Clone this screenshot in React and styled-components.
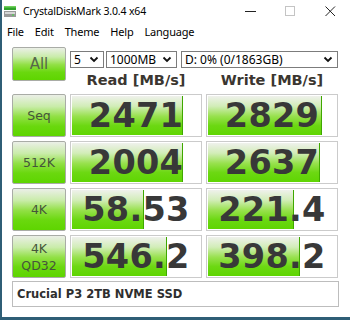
import React from "react";
import styled, { createGlobalStyle } from "styled-components";

const Global = createGlobalStyle`
  html, body { margin: 0; padding: 0; background: #fff; }
  * { box-sizing: border-box; }
`;

const Window = styled.div`
  width: 350px;
  height: 320px;
  background: #fff;
  border-left: 2px solid #2f5e76;
  border-bottom: 3px solid #2f5e76;
  font-family: "Noto Sans", "DejaVu Sans", sans-serif;
  color: #000;
  overflow: hidden;
`;

const TitleBar = styled.div`
  display: flex;
  align-items: center;
  height: 22px;
  padding-left: 1px;
`;

const TitleText = styled.span`
  margin-left: 6px;
  font-size: 10.5px;
  color: #000;
  letter-spacing: -0.15px;
`;

const Controls = styled.div`
  display: flex;
  margin-left: auto;
`;

const Ctrl = styled.div`
  width: 40px;
  height: 22px;
  display: flex;
  align-items: center;
  justify-content: center;
`;

const MenuBar = styled.div`
  display: flex;
  height: 18px;
  align-items: center;
  padding-left: 0;
  font-size: 11px;
`;

const MenuItem = styled.span`
  padding: 0 5px;
  margin-right: 1px;
  letter-spacing: -0.2px;
`;

const Client = styled.div`
  padding: 7px 0 0 10px;
`;

const Grid = styled.div`
  display: grid;
  grid-template-columns: 54px 132px 132px;
  grid-auto-rows: 43px;
  column-gap: 4px;
  row-gap: 4px;
`;

const LabelButton = styled.div`
  height: ${(p) => (p.$short ? "34px" : "43px")};
  border: 1px solid #a9aca6;
  border-radius: 2px;
  background: linear-gradient(#ebefe7 0%, #c9eca9 28%, #92e046 52%, #6ad80e 76%, #5ed500 100%);
  display: flex;
  flex-direction: column;
  align-items: center;
  justify-content: center;
  font-family: "DejaVu Sans", sans-serif;
  font-size: ${(p) => (p.$big ? "15px" : "12.5px")};
  line-height: 17px;
  color: ${(p) => (p.$big ? "#56674a" : "#45553a")};
`;

const Top = styled.div`
  grid-column: 2 / 4;
  display: flex;
  flex-direction: column;
`;

const Selects = styled.div`
  display: flex;
  margin-top: 4px;
  height: 17px;
`;

const Select = styled.div`
  width: ${(p) => p.$w}px;
  margin-right: ${(p) => p.$gap || 0}px;
  height: 17px;
  border: 1px solid #7c7c7c;
  display: flex;
  align-items: center;
  padding: 0 4px 0 3px;
  font-size: 12px;
  background: #fff;
  justify-content: space-between;
`;

const Headers = styled.div`
  display: grid;
  grid-template-columns: 132px 132px;
  column-gap: 4px;
  margin-top: 2px;
`;

const Header = styled.div`
  text-align: center;
  font-family: "DejaVu Sans", sans-serif;
  font-weight: bold;
  font-size: 14.5px;
  color: #3b3630;
  line-height: 20px;
`;

const Cell = styled.div`
  position: relative;
  border: 1px solid #cbcbcb;
  background: #fff;
  overflow: hidden;
`;

const Bar = styled.div`
  position: absolute;
  left: 1px;
  top: 1px;
  bottom: 1px;
  background: linear-gradient(#eff1ec 0%, #d2edb8 26%, #98e14e 52%, #6cd812 76%, #5fd502 100%);
  border-right: 1px solid #3fa800;
`;

const Value = styled.div`
  position: relative;
  height: 100%;
  display: flex;
  align-items: center;
  justify-content: center;
  font-family: "DejaVu Sans", sans-serif;
  font-weight: bold;
  font-size: 33.5px;
  color: #383838;
  letter-spacing: 0.3px;
`;

const Info = styled.div`
  margin-top: 3px;
  width: 327px;
  height: 26px;
  border: 1px solid #bdbdbd;
  display: flex;
  align-items: center;
  padding-left: 4px;
  font-family: "DejaVu Sans", sans-serif;
  font-weight: bold;
  font-size: 11.5px;
  color: #2e2e2e;
`;

const Chevron = () => (
  <svg width="10" height="7" viewBox="0 0 10 7">
    <polyline points="1.5,1.5 5,5 8.5,1.5" fill="none" stroke="#111" strokeWidth="1.8" />
  </svg>
);

const AppIcon = () => (
  <svg width="14" height="14" viewBox="0 0 14 14">
    <rect x="1" y="2" width="12" height="4" fill="#2fa32a" />
    <rect x="1" y="2" width="12" height="1.5" fill="#6fd05a" />
    <rect x="1" y="7" width="12" height="6" fill="#9a9a9a" />
    <rect x="2" y="8" width="10" height="2" fill="#d6d6d6" />
    <rect x="9" y="10.5" width="2" height="1" fill="#3bd83b" />
  </svg>
);

const rows = [
  { label: ["Seq"], read: "2471", rw: 85, write: "2829", ww: 88 },
  { label: ["512K"], read: "2004", rw: 85, write: "2637", ww: 86 },
  { label: ["4K"], read: "58.53", rw: 55, write: "221.4", ww: 66 },
  { label: ["4K", "QD32"], read: "546.2", rw: 73, write: "398.2", ww: 71 },
];

const Result = ({ value, width }) => (
  <Cell>
    <Bar style={{ width: `${width}%` }} />
    <Value>{value}</Value>
  </Cell>
);

export default function App() {
  return (
    <>
      <Global />
      <Window>
        <TitleBar>
          <AppIcon />
          <TitleText>CrystalDiskMark 3.0.4 x64</TitleText>
          <Controls>
            <Ctrl>
              <svg width="11" height="11" viewBox="0 0 11 11">
                <line x1="0" y1="5.5" x2="11" y2="5.5" stroke="#222" strokeWidth="1" />
              </svg>
            </Ctrl>
            <Ctrl>
              <svg width="11" height="11" viewBox="0 0 11 11">
                <rect x="0.5" y="0.5" width="9" height="9" fill="none" stroke="#c4c4c4" strokeWidth="1" />
              </svg>
            </Ctrl>
            <Ctrl>
              <svg width="11" height="11" viewBox="0 0 11 11">
                <path d="M0.5 0.5 L10 10 M10 0.5 L0.5 10" stroke="#222" strokeWidth="1" />
              </svg>
            </Ctrl>
          </Controls>
        </TitleBar>
        <MenuBar>
          <MenuItem>File</MenuItem>
          <MenuItem>Edit</MenuItem>
          <MenuItem>Theme</MenuItem>
          <MenuItem>Help</MenuItem>
          <MenuItem>Language</MenuItem>
        </MenuBar>
        <Client>
          <Grid>
            <LabelButton $short $big>All</LabelButton>
            <Top>
              <Selects>
                <Select $w={34} $gap={2}>5<Chevron /></Select>
                <Select $w={71} $gap={4}>1000MB<Chevron /></Select>
                <Select $w={157}>D: 0% (0/1863GB)<Chevron /></Select>
              </Selects>
              <Headers>
                <Header>Read [MB/s]</Header>
                <Header>Write [MB/s]</Header>
              </Headers>
            </Top>
            {rows.map((r) => (
              <React.Fragment key={r.label.join()}>
                <LabelButton>
                  {r.label.map((l) => (
                    <span key={l}>{l}</span>
                  ))}
                </LabelButton>
                <Result value={r.read} width={r.rw} />
                <Result value={r.write} width={r.ww} />
              </React.Fragment>
            ))}
          </Grid>
          <Info>Crucial P3 2TB NVME SSD</Info>
        </Client>
      </Window>
    </>
  );
}
